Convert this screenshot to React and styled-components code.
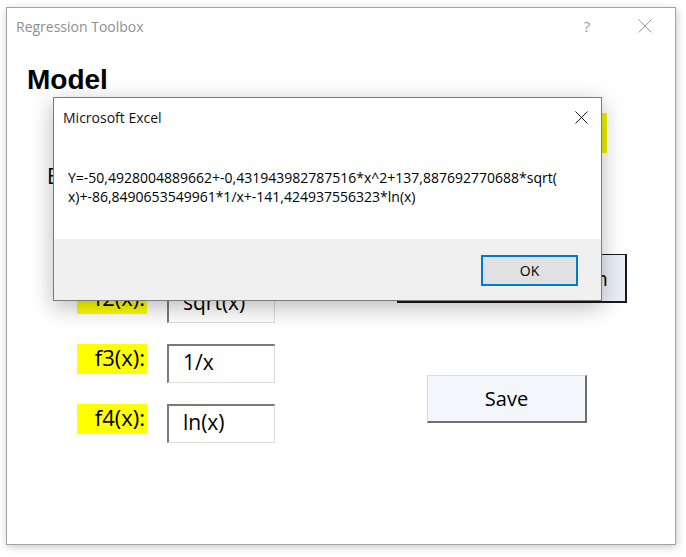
import React from 'react'
import styled, { createGlobalStyle } from 'styled-components'

const Global = createGlobalStyle`
  html, body {
    margin: 0;
    padding: 0;
    background: #ffffff;
    font-family: "Open Sans", "Noto Sans", sans-serif;
  }
`

const Page = styled.div`
  width: 686px;
  height: 557px;
  padding: 7px 0 0 6px;
  box-sizing: border-box;
  overflow: hidden;
`

const Window = styled.div`
  position: relative;
  width: 670px;
  height: 538px;
  box-sizing: border-box;
  border: 1px solid #a3a3a3;
  background: #fff;
  box-shadow: 1px 2px 8px rgba(0, 0, 0, 0.22);
  display: flex;
  flex-direction: column;
`

const TitleBar = styled.div`
  height: 36px;
  display: flex;
  align-items: center;
  padding: 0 0 0 9px;
  color: #8f8f8f;
  font-size: 14px;
`

const TitleText = styled.div`
  flex: 1;
`

const TitleButton = styled.div`
  width: ${p => p.w}px;
  display: flex;
  justify-content: center;
  align-items: center;
  color: #9a9a9a;
  font-size: 15px;
`

const Body = styled.div`
  padding: 20px 0 0 20px;
`

const Heading = styled.h1`
  margin: 0;
  font-family: "Liberation Sans", Arial, sans-serif;
  font-weight: bold;
  font-size: 28px;
  line-height: 32px;
  color: #000;
`

const Form = styled.div`
  display: flex;
`

const LeftCol = styled.div`
  width: 370px;
  display: flex;
  flex-direction: column;
`

const SectionLabel = styled.div`
  margin: 68px 0 36px 20px;
  font-size: 21px;
  line-height: 24px;
  color: #000;
`

const Row = styled.div`
  display: flex;
  align-items: flex-start;
  gap: 20px;
  margin: 0 0 21px 50px;
`

const FnLabel = styled.div`
  width: 70px;
  height: 30px;
  box-sizing: border-box;
  background: #ffff00;
  text-align: right;
  padding-right: 2px;
  font-size: 22px;
  line-height: 26px;
  color: #000;
`

const FnInput = styled.div`
  width: 108px;
  height: 39px;
  box-sizing: border-box;
  border-top: 2px solid #7a7a7a;
  border-left: 2px solid #7a7a7a;
  border-right: 1px solid #dcdcdc;
  border-bottom: 1px solid #dcdcdc;
  padding-left: 14px;
  font-size: 21px;
  line-height: 32px;
  color: #000;
  background: #fff;
`

const RightCol = styled.div`
  display: flex;
  flex-direction: column;
  align-items: flex-start;
`

const ResultBox = styled.div`
  margin: 17px 0 0 33px;
  width: 177px;
  height: 40px;
  background: #f0f000;
`

const BigButton = styled.div`
  margin: ${p => p.m};
  width: ${p => p.w}px;
  height: ${p => p.h}px;
  box-sizing: border-box;
  display: flex;
  align-items: center;
  justify-content: center;
  font-size: 20px;
  color: #000;
  background: ${p => (p.primary ? '#eaeef6' : '#f3f6fb')};
  border-top: 1px solid ${p => (p.primary ? '#1a1a1a' : '#dadada')};
  border-left: 1px solid ${p => (p.primary ? '#1a1a1a' : '#dadada')};
  border-right: 2px solid ${p => (p.primary ? '#1a1a1a' : '#6f6f6f')};
  border-bottom: 2px solid ${p => (p.primary ? '#1a1a1a' : '#6f6f6f')};
`

const Dialog = styled.div`
  position: absolute;
  left: 46px;
  top: 89px;
  width: 549px;
  height: 204px;
  box-sizing: border-box;
  border: 1px solid #7c7c7c;
  background: #fff;
  box-shadow: 0 6px 22px rgba(0, 0, 0, 0.28);
  display: flex;
  flex-direction: column;
`

const DialogMain = styled.div`
  height: 141px;
  background: #fff;
`

const DialogHeader = styled.div`
  height: 38px;
  display: flex;
  align-items: center;
  padding-left: 9px;
  font-size: 14px;
  color: #111;
`

const DialogTitle = styled.div`
  flex: 1;
`

const CloseBox = styled.div`
  width: 40px;
  display: flex;
  justify-content: center;
  align-items: center;
`

const Message = styled.div`
  margin: 32px 0 0 14px;
  font-size: 14px;
  line-height: 19px;
  color: #000;
  white-space: nowrap;
`

const DialogFooter = styled.div`
  flex: 1;
  background: #f0f0f0;
  display: flex;
  justify-content: flex-end;
  align-items: flex-start;
  padding: 16px 23px 0 0;
`

const OkButton = styled.div`
  width: 97px;
  height: 31px;
  box-sizing: border-box;
  border: 2px solid #0078d7;
  background: #e1e1e1;
  display: flex;
  align-items: center;
  justify-content: center;
  font-size: 14px;
  color: #000;
`

const Cross = ({ size, color }) => (
  <svg width={size} height={size} viewBox="0 0 14 14">
    <path d="M0.5 0.5 L13.5 13.5 M13.5 0.5 L0.5 13.5" stroke={color} strokeWidth="1" fill="none" />
  </svg>
)

const rows = [
  ['f1(x):', 'x^2'],
  ['f2(x):', 'sqrt(x)'],
  ['f3(x):', '1/x'],
  ['f4(x):', 'ln(x)'],
]

const App = () => {
  return (
    <Page>
      <Global />
      <Window>
        <TitleBar>
          <TitleText>Regression Toolbox</TitleText>
          <TitleButton w={56}>?</TitleButton>
          <TitleButton w={60}>
            <Cross size={14} color="#9a9a9a" />
          </TitleButton>
        </TitleBar>
        <Body>
          <Heading>Model</Heading>
          <Form>
            <LeftCol>
              <SectionLabel>Base functions</SectionLabel>
              {rows.map(([label, value]) => (
                <Row key={label}>
                  <FnLabel>{label}</FnLabel>
                  <FnInput>{value}</FnInput>
                </Row>
              ))}
            </LeftCol>
            <RightCol>
              <ResultBox />
              <BigButton primary m="101px 0 0 0" w={230} h={49}>Calculate Regression</BigButton>
              <BigButton m="72px 0 0 30px" w={160} h={48}>Save</BigButton>
            </RightCol>
          </Form>
        </Body>

        <Dialog>
          <DialogMain>
            <DialogHeader>
              <DialogTitle>Microsoft Excel</DialogTitle>
              <CloseBox>
                <Cross size={13} color="#111" />
              </CloseBox>
            </DialogHeader>
            <Message>
              Y=-50,4928004889662+-0,431943982787516*x^2+137,887692770688*sqrt(
              <br />
              x)+-86,8490653549961*1/x+-141,424937556323*ln(x)
            </Message>
          </DialogMain>
          <DialogFooter>
            <OkButton>OK</OkButton>
          </DialogFooter>
        </Dialog>
      </Window>
    </Page>
  )
}

export default App
